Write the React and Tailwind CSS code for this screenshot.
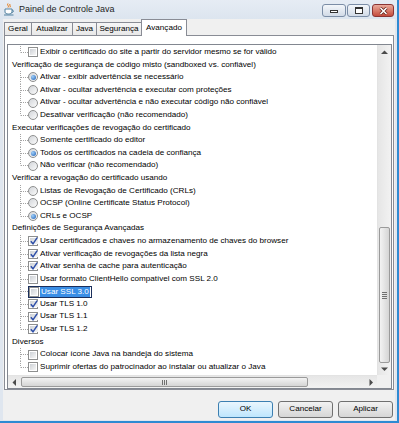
const rows = [
  { t: "check", label: "Exibir o certificado do site a partir do servidor mesmo se for válido" },
  { t: "head", label: "Verificação de segurança de código misto (sandboxed vs. confiável)" },
  { t: "radio", label: "Ativar - exibir advertência se necessário", on: true },
  { t: "radio", label: "Ativar - ocultar advertência e executar com proteções" },
  { t: "radio", label: "Ativar - ocultar advertência e não executar código não confiável" },
  { t: "radio", label: "Desativar verificação (não recomendado)" },
  { t: "head", label: "Executar verificações de revogação do certificado" },
  { t: "radio", label: "Somente certificado do editor" },
  { t: "radio", label: "Todos os certificados na cadeia de confiança", on: true },
  { t: "radio", label: "Não verificar (não recomendado)" },
  { t: "head", label: "Verificar a revogação do certificado usando" },
  { t: "radio", label: "Listas de Revogação de Certificado (CRLs)" },
  { t: "radio", label: "OCSP (Online Certificate Status Protocol)" },
  { t: "radio", label: "CRLs e OCSP", on: true },
  { t: "head", label: "Definições de Segurança Avançadas" },
  { t: "check", label: "Usar certificados e chaves no armazenamento de chaves do browser", on: true },
  { t: "check", label: "Ativar verificação de revogações da lista negra", on: true },
  { t: "check", label: "Ativar senha de cache para autenticação", on: true },
  { t: "check", label: "Usar formato ClientHello compatível com SSL 2.0" },
  { t: "check", label: "Usar SSL 3.0", sel: true },
  { t: "check", label: "Usar TLS 1.0", on: true },
  { t: "check", label: "Usar TLS 1.1", on: true },
  { t: "check", label: "Usar TLS 1.2", on: true },
  { t: "head", label: "Diversos" },
  { t: "check", label: "Colocar ícone Java na bandeja do sistema" },
  { t: "check", label: "Suprimir ofertas do patrocinador ao instalar ou atualizar o Java" },
];

function Connector({ last }) {
  return (
    <svg width="20" height="12.6" className="block shrink-0">
      <line x1="12.5" y1="0" x2="12.5" y2={last ? 6.5 : 12.6} stroke="#a3a3a3" strokeDasharray="1 1" />
      <line x1="13" y1="6.5" x2="20" y2="6.5" stroke="#a3a3a3" strokeDasharray="1 1" />
    </svg>
  );
}

function Check({ on }) {
  return (
    <span className="flex h-[10px] w-[10px] shrink-0 border border-[#8e8f8f] bg-white p-[1px]">
      <span className="flex flex-1 items-center justify-center bg-linear-to-br from-[#cdd1d6] to-[#f7f7f7]">
        {on && (
          <svg width="8" height="8" viewBox="0 0 8 8" className="overflow-visible">
            <path d="M0.8 4.2 L3 6.8 L7.2 0.6" fill="none" stroke="#2d4ea8" strokeWidth="1.5" />
          </svg>
        )}
      </span>
    </span>
  );
}

function Radio({ on }) {
  return (
    <span className="flex h-[10px] w-[10px] shrink-0 items-center justify-center rounded-full border border-[#8e8f8f] bg-linear-to-br from-[#d2d5d9] to-[#fbfbfb]">
      {on && <span className="h-[5px] w-[5px] rounded-full bg-[radial-gradient(circle_at_35%_35%,#9fd0fa,#1d5db3)]" />}
    </span>
  );
}

function Arrow({ dir }) {
  const d = {
    up: "M0 4 L3.5 0.5 L7 4 Z",
    down: "M0 0.5 L3.5 4 L7 0.5 Z",
    left: "M4 0 L0.5 3.5 L4 7 Z",
    right: "M0.5 0 L4 3.5 L0.5 7 Z",
  }[dir];
  const vert = dir === "up" || dir === "down";
  return (
    <svg width={vert ? 7 : 5} height={vert ? 5 : 7} viewBox={vert ? "0 0 7 5" : "0 0 5 7"}>
      <path d={d} fill="#4b4b4b" />
    </svg>
  );
}

function TreeRow({ row, last }) {
  if (row.t === "head") {
    return <div className="h-[12.6px] whitespace-nowrap pl-[4px] leading-[12.6px]">{row.label}</div>;
  }
  const control = row.t === "radio" ? <Radio on={row.on} /> : <Check on={row.on} />;
  return (
    <div className="flex h-[12.6px] items-center whitespace-nowrap leading-[12.6px]">
      <Connector last={last} />
      {row.sel ? (
        <span className="flex h-[12px] items-center gap-[1px] border border-[#1b2f5c] pr-[1px]">
          {control}
          <span className="bg-[#3a8ee6] px-[1px] leading-[10px] text-white">{row.label}</span>
        </span>
      ) : (
        <>
          {control}
          <span className="pl-[2px]">{row.label}</span>
        </>
      )}
    </div>
  );
}

function JavaIcon() {
  return (
    <svg width="12" height="13" viewBox="0 0 12 13">
      <path d="M5 0.5 C3.5 2 6.5 3 5 4.5" fill="none" stroke="#e76f00" strokeWidth="1" />
      <path d="M7 1 C6 2.3 8 3 7 4.3" fill="none" stroke="#e76f00" strokeWidth="1" />
      <path d="M2 6 H9 V9 C9 10.5 7.5 11 5.5 11 C3.5 11 2 10.5 2 9 Z" fill="#fff" stroke="#5382a1" strokeWidth="1" />
      <path d="M9 7 C11 7 11 9.5 8.5 9.5" fill="none" stroke="#5382a1" strokeWidth="1" />
      <path d="M1 12 H10.5" stroke="#5382a1" strokeWidth="1" />
    </svg>
  );
}

const tabs = ["Geral", "Atualizar", "Java", "Segurança"];
const tabW = ["w-[27px]", "w-[41px]", "w-[24px]", "w-[45px]"];

function Button({ children, primary }) {
  return (
    <div
      className={
        "flex h-[17px] w-[55px] items-center justify-center rounded-[3px] border " +
        (primary
          ? "border-[#3c7fb1] bg-linear-to-b from-[#eaf6fd] to-[#bee6fd]"
          : "border-[#707070] bg-linear-to-b from-[#f2f2f2] to-[#d6d6d6]")
      }
    >
      {children}
    </div>
  );
}

export default function App() {
  return (
    <div className="flex h-[423px] w-[399px] flex-col border-r-2 border-b-2 border-[#2e8ad2] bg-[#dfe6ef] font-['Liberation_Sans',Arial,sans-serif] text-[8.1px] text-black">
      {/* title bar */}
      <div className="flex h-[19px] shrink-0 items-start bg-linear-to-b from-[#e6ecf4] to-[#dce5ef]">
        <div className="pl-[3px] pt-[3px]">
          <JavaIcon />
        </div>
        <div className="pl-[4px] pt-[3px] text-[9px] leading-[13px] text-[#1e1e1e]">Painel de Controle Java</div>
        <div className="ml-auto flex gap-[1px] pr-[3px] pt-[4px]">
          <div className="flex h-[13px] w-[24px] items-end justify-center rounded-[3px] border border-[#7b8da6] bg-linear-to-b from-[#f3f6fa] to-[#d2dbe7] pb-[3px]">
            <span className="h-[3px] w-[8px] border border-[#333] bg-white" />
          </div>
          <div className="mr-[1px] flex h-[13px] w-[23px] items-center justify-center rounded-[3px] border border-[#7b8da6] bg-linear-to-b from-[#f3f6fa] to-[#d2dbe7]">
            <span className="h-[7px] w-[8px] border border-t-2 border-[#333] bg-white" />
          </div>
          <div className="flex h-[13px] w-[22px] items-center justify-center rounded-[3px] border border-[#8a3434] bg-linear-to-b from-[#e9a99b] to-[#c44a3c]">
            <svg width="9" height="8" viewBox="0 0 9 8">
              <path d="M1.5 1 L7.5 7 M7.5 1 L1.5 7" stroke="#5a1c16" strokeWidth="3" />
              <path d="M1.5 1 L7.5 7 M7.5 1 L1.5 7" stroke="#fff" strokeWidth="1.6" />
            </svg>
          </div>
        </div>
      </div>

      {/* client */}
      <div className="mb-[1px] ml-[3px] mr-[2px] flex flex-1 flex-col bg-[#f0f0f0] px-[1px]">
        {/* tabs */}
        <div className="flex h-[16px] shrink-0 items-end">
          {tabs.map((t, i) => (
            <div
              key={t}
              className={
                "flex h-[13px] items-center justify-center border-t border-l border-[#898c95] bg-linear-to-b from-[#f6f6f6] to-[#e8e8e8] leading-[12px] " +
                tabW[i]
              }
            >
              {t}
            </div>
          ))}
          <div className="relative z-10 -mb-[1px] flex h-[17px] w-[46px] items-start justify-center border-x border-t border-[#898c95] bg-white pt-[2px] leading-[11px]">
            Avançado
          </div>
        </div>

        {/* panel */}
        <div className="flex h-[355px] shrink-0 flex-col border border-[#898c95] bg-white pb-[0px] pl-[2px] pr-[1px] pt-[8px]">
          <div className="flex flex-1 flex-col border border-[#828790]">
            <div className="flex flex-1">
              <div className="flex-1 overflow-hidden bg-white pt-[1px]">
                {rows.map((r, i) => {
                  const next = rows[i + 1];
                  const last = !next || next.t === "head";
                  return <TreeRow key={i} row={r} last={last} />;
                })}
              </div>
              {/* vertical scrollbar */}
              <div className="flex w-[14px] flex-col border-l border-[#e3e3e3] bg-linear-to-r from-[#e6e6e6] to-[#f2f2f2]">
                <div className="flex h-[14px] items-center justify-center">
                  <Arrow dir="up" />
                </div>
                <div className="h-[168px]" />
                <div className="mx-[1px] flex h-[136px] items-center justify-center rounded-[2px] border border-[#9a9a9a] bg-linear-to-r from-[#f3f3f3] to-[#d5d5d5]">
                  <div className="flex flex-col gap-[1px]">
                    <span className="h-px w-[5px] bg-[#707070]" />
                    <span className="h-px w-[5px] bg-[#707070]" />
                    <span className="h-px w-[5px] bg-[#707070]" />
                    <span className="h-px w-[5px] bg-[#707070]" />
                  </div>
                </div>
                <div className="flex flex-1 items-center justify-center">
                  <Arrow dir="down" />
                </div>
              </div>
            </div>
            {/* horizontal scrollbar */}
            <div className="flex h-[13px] shrink-0">
              <div className="flex flex-1 border-t border-[#e3e3e3] bg-linear-to-b from-[#e6e6e6] to-[#f2f2f2]">
                <div className="flex w-[13px] items-center justify-center">
                  <Arrow dir="left" />
                </div>
                <div className="my-[1px] flex w-[287px] items-center justify-center rounded-[2px] border border-[#9a9a9a] bg-linear-to-b from-[#f3f3f3] to-[#d5d5d5]">
                  <div className="flex gap-[1px]">
                    <span className="h-[5px] w-px bg-[#707070]" />
                    <span className="h-[5px] w-px bg-[#707070]" />
                    <span className="h-[5px] w-px bg-[#707070]" />
                  </div>
                </div>
                <div className="flex-1" />
                <div className="flex w-[12px] items-center justify-center">
                  <Arrow dir="right" />
                </div>
              </div>
              <div className="w-[14px] bg-[#f0f0f0]" />
            </div>
          </div>
        </div>

        {/* buttons */}
        <div className="flex flex-1 items-start justify-end gap-[5px] pr-[1px] pt-[11px]">
          <Button primary>OK</Button>
          <Button>Cancelar</Button>
          <Button>Aplicar</Button>
        </div>
      </div>
    </div>
  );
}
